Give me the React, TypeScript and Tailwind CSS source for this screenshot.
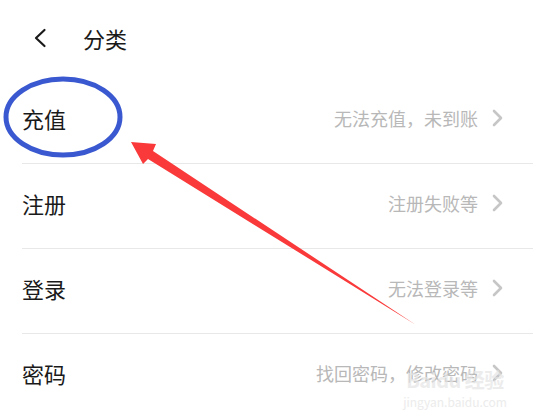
type Category = {
  title: string;
  hint: string;
};

const categories: Category[] = [
  { title: "充值", hint: "无法充值，未到账" },
  { title: "注册", hint: "注册失败等" },
  { title: "登录", hint: "无法登录等" },
  { title: "密码", hint: "找回密码，修改密码" },
];

function Chevron({ dir }: { dir: "left" | "right" }) {
  if (dir === "left") {
    return (
      <svg width="14" height="20" viewBox="0 0 14 20" fill="none">
        <polyline points="11.5,2 3,10 11.5,18" stroke="#1a1a1a" strokeWidth="2.2" strokeLinecap="round" strokeLinejoin="round" />
      </svg>
    );
  }
  return (
    <svg width="11" height="18" viewBox="0 0 11 18" fill="none">
      <polyline points="2,2 9,9 2,16" stroke="#c6c6c6" strokeWidth="2.6" strokeLinecap="round" strokeLinejoin="round" />
    </svg>
  );
}

function CategoryRow({ item }: { item: Category }) {
  return (
    <div className="ml-[22px] flex h-[85px] items-center justify-between border-b border-[#e8e8e8] pb-[7px] pr-[30px]">
      <span className="text-[22px] leading-none text-[#1a1a1a]">{item.title}</span>
      <div className="flex items-center gap-[14px]">
        <span className="text-[18px] leading-none text-[#b8b8b8]">{item.hint}</span>
        <Chevron dir="right" />
      </div>
    </div>
  );
}

export default function App() {
  return (
    <div
      className="relative h-[418px] w-[533px] overflow-hidden bg-white"
      style={{ fontFamily: '"Noto Sans CJK SC", "Noto Sans", sans-serif' }}
    >
      <header className="flex h-[79px] items-center pb-[4px] pl-[33px]">
        <Chevron dir="left" />
        <h1 className="ml-[36px] text-[22px] leading-none text-[#1a1a1a]">分类</h1>
      </header>

      <div className="flex flex-col">
        {categories.map((item) => (
          <CategoryRow key={item.title} item={item} />
        ))}
      </div>

      {/* annotation marks drawn over the screenshot */}
      <svg className="pointer-events-none absolute inset-0" width="533" height="418" viewBox="0 0 533 418">
        <ellipse cx="63" cy="117" rx="57" ry="38" fill="none" stroke="#3a59d1" strokeWidth="5" />
        <polygon points="131,142 156,144 153,151 416,325 148,159 143,164" fill="#fa3a3a" />
      </svg>

      <div className="pointer-events-none absolute left-[406px] top-[370px] flex w-[98px] flex-col items-center text-[#e4e4e4] opacity-70">
        <span className="text-[20px] font-bold leading-none tracking-tight">Baidu 经验</span>
        <span className="mt-[6px] text-[12px] leading-none">jingyan.baidu.com</span>
      </div>
    </div>
  );
}
